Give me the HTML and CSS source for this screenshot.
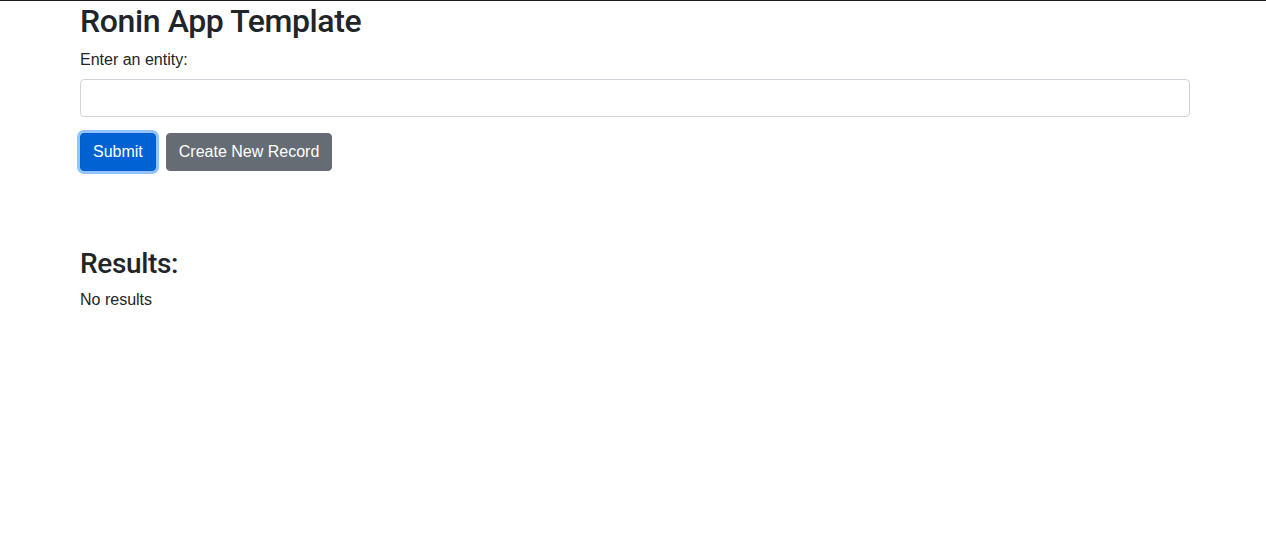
FILE: index.html
```html
<!DOCTYPE html>
<html lang="en">
<head>
<meta charset="utf-8">
<title>Ronin App Template</title>
<link rel="stylesheet" href="styles.css">
</head>
<body>
<div class="container">
  <h2 class="title">Ronin App Template</h2>
  <form class="entity-form">
    <label class="form-label" for="entity">Enter an entity:</label>
    <input class="form-control" id="entity" type="text">
    <div class="actions">
      <button type="button" class="btn btn-primary">Submit</button>
      <button type="button" class="btn btn-secondary">Create New Record</button>
    </div>
  </form>
  <section class="results">
    <h3 class="results-title">Results:</h3>
    <p class="results-empty">No results</p>
  </section>
</div>
</body>
</html>
```

FILE: styles.css
```css
html, body {
  margin: 0;
  padding: 0;
  background: #fff;
}
body {
  border-top: 1px solid #1a1a1a;
  font-family: "Liberation Sans", Arial, sans-serif;
  font-size: 16px;
  line-height: 1.5;
  color: #212529;
}
.container {
  width: 1110px;
  margin-left: 80px;
}
.title {
  margin: 1px 0 8px;
  font-family: Roboto, "Liberation Sans", Arial, sans-serif;
  font-size: 32px;
  font-weight: 500;
  line-height: 1.2;
  letter-spacing: -0.4px;
}
.entity-form {
  display: flex;
  flex-direction: column;
}
.form-label {
  display: block;
  margin-bottom: 7px;
}
.form-control {
  box-sizing: border-box;
  width: 100%;
  height: 38px;
  margin: 0 0 16px;
  padding: 6px 12px;
  font: inherit;
  color: #495057;
  background: #fff;
  border: 1px solid #ced4da;
  border-radius: 4px;
  outline: none;
}
.actions {
  display: flex;
  gap: 10px;
}
.btn {
  box-sizing: border-box;
  height: 38px;
  padding: 6px 12px;
  font: inherit;
  line-height: 24px;
  color: #fff;
  border: 1px solid transparent;
  border-radius: 4px;
  cursor: pointer;
}
.btn-primary {
  background: #0062d3;
  border-color: #005cc8;
  box-shadow: 0 0 0 3px #92c5ff;
}
.btn-secondary {
  background: #656c74;
  border-color: #656c74;
}
.results {
  margin-top: 76px;
}
.results-title {
  margin: 0 0 7px;
  font-family: Roboto, "Liberation Sans", Arial, sans-serif;
  font-size: 28px;
  font-weight: 500;
  line-height: 1.2;
  letter-spacing: -0.35px;
}
.results-empty {
  margin: 0;
}
```
